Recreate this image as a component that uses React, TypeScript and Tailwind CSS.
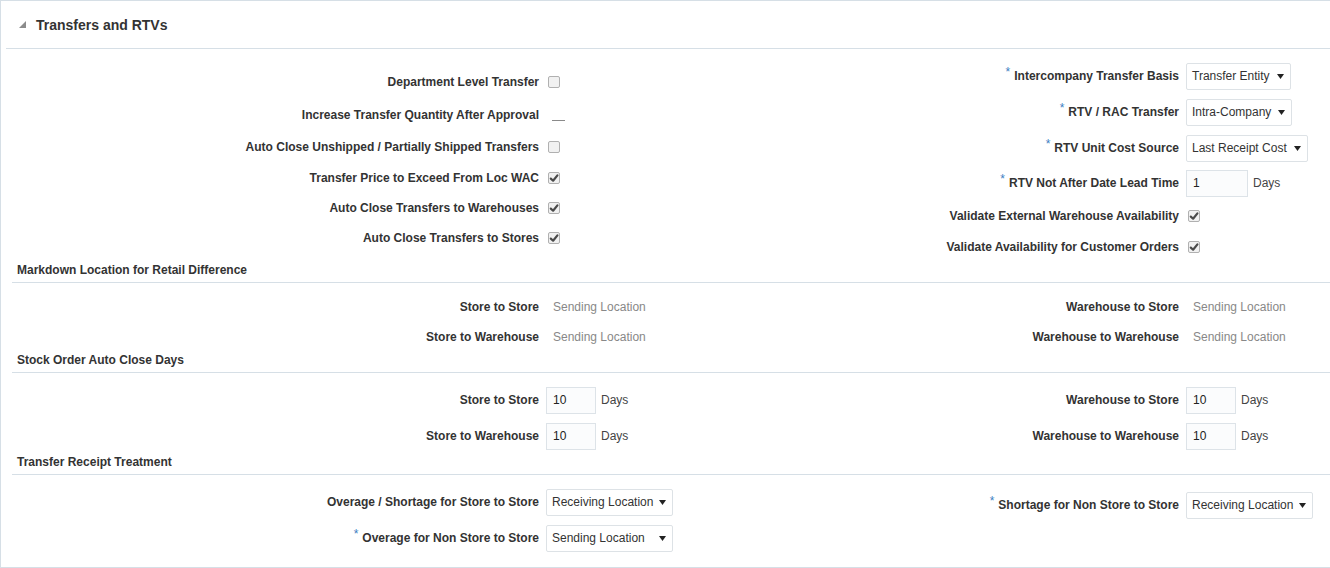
import type { ReactNode } from "react";

const LINE = "border-[#d6dfe6]";

function Label({ children, required }: { children: ReactNode; required?: boolean }) {
  return (
    <span className="text-right text-[12px] font-bold text-[#333]">
      {required && (
        <span className="relative -top-[4px] mr-[4px] font-normal text-[#3c7ec3]">*</span>
      )}
      {children}
    </span>
  );
}

function Row({
  label,
  required,
  height,
  labelWidth,
  children,
}: {
  label: string;
  required?: boolean;
  height: string;
  labelWidth: string;
  children: ReactNode;
}) {
  return (
    <div className={`flex items-center ${height}`}>
      <div className={`flex shrink-0 justify-end ${labelWidth}`}>
        <Label required={required}>{label}</Label>
      </div>
      <div className="ml-[7px] flex items-center">{children}</div>
    </div>
  );
}

function Check({ checked }: { checked?: boolean }) {
  return (
    <span className="ml-[2px] flex h-[12px] w-[12px] items-center justify-center rounded-[2px] border border-[#b0b0b0] bg-[#f1f1f1]">
      {checked && (
        <svg viewBox="0 0 10 10" className="h-[10px] w-[10px]">
          <path
            d="M1.8 5.6 L4.1 7.7 L8.4 2.4"
            stroke="#4a4a4a"
            strokeWidth="2.2"
            strokeLinecap="round"
            strokeLinejoin="round"
            fill="none"
          />
        </svg>
      )}
    </span>
  );
}

function Arrow() {
  return (
    <svg viewBox="0 0 7 5" className="h-[5px] w-[7px] shrink-0">
      <path d="M0 0 L7 0 L3.5 5 Z" fill="#222" />
    </svg>
  );
}

function Select({ value, wide }: { value: string; wide?: boolean }) {
  return (
    <div
      className={`flex h-[27px] items-center rounded-[2px] border border-[#dde2e6] bg-white pl-[5px] pr-[6px] text-[12px] text-[#333] ${
        wide ? "w-[127px] justify-between" : "gap-[7px]"
      }`}
    >
      <span>{value}</span>
      <Arrow />
    </div>
  );
}

function DaysInput({ value, width }: { value: string; width: string }) {
  return (
    <div className="flex items-center">
      <div
        className={`flex h-[27px] items-center border border-[#dde3e8] bg-[#fbfcfd] pl-[6px] text-[12px] text-[#222] ${width}`}
      >
        {value}
      </div>
      <span className="ml-[5px] text-[12px] text-[#444]">Days</span>
    </div>
  );
}

function ReadOnly({ value }: { value: string }) {
  return <span className="pl-[7px] text-[12px] text-[#888]">{value}</span>;
}

function Heading({ children }: { children: ReactNode }) {
  return (
    <div className={`ml-[11px] border-b ${LINE} pb-[4px] pl-[5px] text-[12px] font-bold leading-[16px] text-[#333]`}>
      {children}
    </div>
  );
}

const L = "w-[538px]";
const R = "w-[479px]";

export default function App() {
  return (
    <div className={`w-[1330px] border-b border-l border-t ${LINE} bg-white pb-[11px] font-['Liberation_Sans',Arial,sans-serif]`}>
      <div className={`ml-[5px] flex h-[48px] items-center border-b ${LINE} pl-[13px]`}>
        <svg viewBox="0 0 7 7" className="h-[7px] w-[7px]">
          <path d="M7 0 L7 7 L0 7 Z" fill="#8c8c8c" />
        </svg>
        <span className="ml-[10px] pt-[2px] text-[14px] font-bold text-[#333]">Transfers and RTVs</span>
      </div>

      <div className="flex items-start">
        <div className="w-[699px] pt-[16px]">
          <Row label="Department Level Transfer" height="h-[33px]" labelWidth={L}>
            <Check />
          </Row>
          <Row label="Increase Transfer Quantity After Approval" height="h-[33px]" labelWidth={L}>
            <span className="ml-[6px] mt-[11px] h-px w-[13px] bg-[#8a8a8a]" />
          </Row>
          <Row label="Auto Close Unshipped / Partially Shipped Transfers" height="h-[32px]" labelWidth={L}>
            <Check />
          </Row>
          <Row label="Transfer Price to Exceed From Loc WAC" height="h-[30px]" labelWidth={L}>
            <Check checked />
          </Row>
          <Row label="Auto Close Transfers to Warehouses" height="h-[30px]" labelWidth={L}>
            <Check checked />
          </Row>
          <Row label="Auto Close Transfers to Stores" height="h-[30px]" labelWidth={L}>
            <Check checked />
          </Row>
        </div>
        <div className="pt-[9px]">
          <Row label="Intercompany Transfer Basis" required height="h-[36px]" labelWidth={R}>
            <Select value="Transfer Entity" />
          </Row>
          <Row label="RTV / RAC Transfer" required height="h-[36px]" labelWidth={R}>
            <Select value="Intra-Company" />
          </Row>
          <Row label="RTV Unit Cost Source" required height="h-[36px]" labelWidth={R}>
            <Select value="Last Receipt Cost" />
          </Row>
          <Row label="RTV Not After Date Lead Time" required height="h-[34px]" labelWidth={R}>
            <DaysInput value="1" width="w-[62px]" />
          </Row>
          <Row label="Validate External Warehouse Availability" height="h-[32px]" labelWidth={R}>
            <Check checked />
          </Row>
          <Row label="Validate Availability for Customer Orders" height="h-[30px]" labelWidth={R}>
            <Check checked />
          </Row>
        </div>
      </div>

      <Heading>Markdown Location for Retail Difference</Heading>
      <div className="flex items-start pt-[9px]">
        <div className="w-[699px]">
          <Row label="Store to Store" height="h-[30px]" labelWidth={L}>
            <ReadOnly value="Sending Location" />
          </Row>
          <Row label="Store to Warehouse" height="h-[30px]" labelWidth={L}>
            <ReadOnly value="Sending Location" />
          </Row>
        </div>
        <div>
          <Row label="Warehouse to Store" height="h-[30px]" labelWidth={R}>
            <ReadOnly value="Sending Location" />
          </Row>
          <Row label="Warehouse to Warehouse" height="h-[30px]" labelWidth={R}>
            <ReadOnly value="Sending Location" />
          </Row>
        </div>
      </div>

      <Heading>Stock Order Auto Close Days</Heading>
      <div className="flex items-start pt-[9px]">
        <div className="w-[699px]">
          <Row label="Store to Store" height="h-[36px]" labelWidth={L}>
            <DaysInput value="10" width="w-[50px]" />
          </Row>
          <Row label="Store to Warehouse" height="h-[36px]" labelWidth={L}>
            <DaysInput value="10" width="w-[50px]" />
          </Row>
        </div>
        <div>
          <Row label="Warehouse to Store" height="h-[36px]" labelWidth={R}>
            <DaysInput value="10" width="w-[50px]" />
          </Row>
          <Row label="Warehouse to Warehouse" height="h-[36px]" labelWidth={R}>
            <DaysInput value="10" width="w-[50px]" />
          </Row>
        </div>
      </div>

      <Heading>Transfer Receipt Treatment</Heading>
      <div className="flex items-start pt-[9px]">
        <div className="w-[699px]">
          <Row label="Overage / Shortage for Store to Store" height="h-[36px]" labelWidth={L}>
            <Select value="Receiving Location" wide />
          </Row>
          <Row label="Overage for Non Store to Store" required height="h-[36px]" labelWidth={L}>
            <Select value="Sending Location" wide />
          </Row>
        </div>
        <div className="pt-[3px]">
          <Row label="Shortage for Non Store to Store" required height="h-[36px]" labelWidth={R}>
            <Select value="Receiving Location" wide />
          </Row>
        </div>
      </div>
    </div>
  );
}
